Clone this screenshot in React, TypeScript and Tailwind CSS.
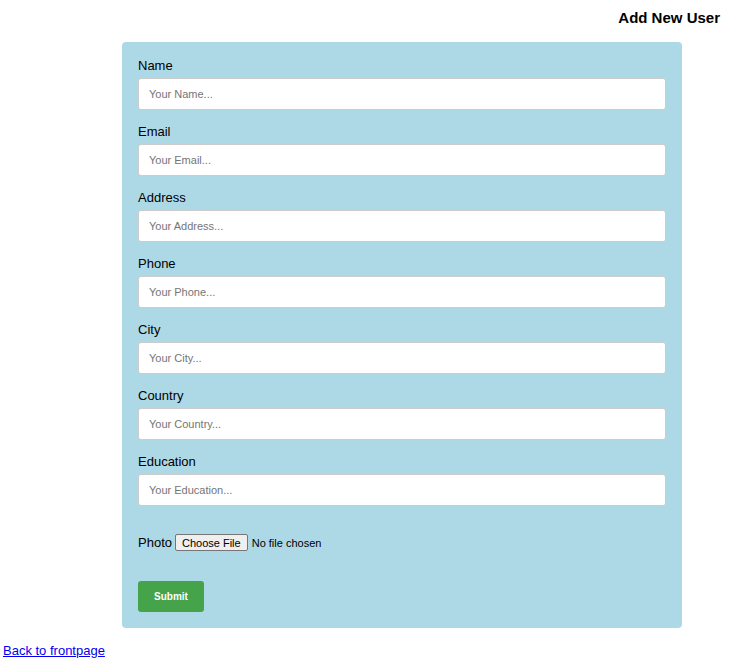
import React from "react";

const fields = [
  { label: "Name", placeholder: "Your Name..." },
  { label: "Email", placeholder: "Your Email..." },
  { label: "Address", placeholder: "Your Address..." },
  { label: "Phone", placeholder: "Your Phone..." },
  { label: "City", placeholder: "Your City..." },
  { label: "Country", placeholder: "Your Country..." },
  { label: "Education", placeholder: "Your Education..." },
];

export default function App() {
  return (
    <div className="min-h-[664px] bg-white font-['Liberation_Sans',Arial,sans-serif] text-black">
      {/* Heading */}
      <h1 className="pt-[9px] pr-4 text-right text-[15px] font-bold leading-[18px]">Add New User</h1>

      {/* Form panel */}
      <form
        className="ml-[122px] mt-[15px] w-[560px] rounded bg-[#add8e6] p-4"
        onSubmit={(e) => e.preventDefault()}
      >
        {fields.map((f) => (
          <div key={f.label} className="mb-[14px]">
            <label className="block text-[13px] leading-4">{f.label}</label>
            <input
              type="text"
              placeholder={f.placeholder}
              className="mt-1 block h-8 w-full rounded-[3px] border border-[#cccccc] bg-white px-[10px] text-[11px] placeholder:text-[#757575] outline-none"
            />
          </div>
        ))}

        {/* Photo */}
        <div className="flex items-center pt-[14px] text-[13px] leading-4">
          <label className="mr-[3px]">Photo</label>
          <input
            type="file"
            className="text-[11px] file:mr-1 file:h-[17px] file:rounded-[2px] file:border file:border-solid file:border-[#767676] file:bg-[#efefef] file:px-[6px] file:text-[11px] file:text-black"
          />
        </div>

        <button
          type="submit"
          className="mt-[30px] h-[31px] w-[66px] rounded-[3px] bg-[#45a349] text-[10px] font-bold text-white"
        >
          Submit
        </button>
      </form>

      <a href="#" className="mt-[15px] ml-[3px] inline-block text-[13px] leading-4 text-[#0000ee] underline">
        Back to frontpage
      </a>
    </div>
  );
}
